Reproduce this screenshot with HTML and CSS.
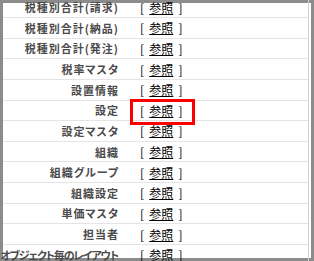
FILE: index.html
```html
<!DOCTYPE html>
<html lang="ja">
<head>
    <meta charset="UTF-8">
    <title>参照一覧</title>
    <link rel="stylesheet" href="styles.css">
</head>
<body>
    <div class="frame">
        <div class="list">
            <div class="row"><span class="label">税種別合計(請求)</span><span class="value">[ <a href="#">参照</a> ]</span></div>
            <div class="row"><span class="label">税種別合計(納品)</span><span class="value">[ <a href="#">参照</a> ]</span></div>
            <div class="row"><span class="label">税種別合計(発注)</span><span class="value">[ <a href="#">参照</a> ]</span></div>
            <div class="row"><span class="label">税率マスタ</span><span class="value">[ <a href="#">参照</a> ]</span></div>
            <div class="row"><span class="label">設置情報</span><span class="value">[ <a href="#">参照</a> ]</span></div>
            <div class="row"><span class="label">設定</span><span class="value">[ <a href="#">参照</a> ]</span></div>
            <div class="row"><span class="label">設定マスタ</span><span class="value">[ <a href="#">参照</a> ]</span></div>
            <div class="row"><span class="label">組織</span><span class="value">[ <a href="#">参照</a> ]</span></div>
            <div class="row"><span class="label">組織グループ</span><span class="value">[ <a href="#">参照</a> ]</span></div>
            <div class="row"><span class="label">組織設定</span><span class="value">[ <a href="#">参照</a> ]</span></div>
            <div class="row"><span class="label">単価マスタ</span><span class="value">[ <a href="#">参照</a> ]</span></div>
            <div class="row"><span class="label">担当者</span><span class="value">[ <a href="#">参照</a> ]</span></div>
            <div class="row"><span class="label label-long">オブジェクト毎のレイアウト</span><span class="value">[ <a href="#">参照</a> ]</span></div>
        </div>
        <div class="highlight"></div>
    </div>
</body>
</html>
```

FILE: styles.css
```css
html, body {
    margin: 0;
    padding: 0;
    background: #fff;
    overflow: hidden;
}

.frame {
    position: relative;
    width: 314px;
    height: 261px;
    box-sizing: border-box;
    border: 3px solid #8c8c8c;
    background: #fff;
}

.list {
    margin-top: -5.6px;
    margin-right: 2px;
    border-right: 1px solid #d4d4d4;
}

.row {
    display: grid;
    grid-template-columns: 123px 1fr;
    align-items: center;
    height: 20.64px;
    box-sizing: border-box;
    border-bottom: 1px solid #e4e4e4;
    font-family: "Noto Sans CJK JP", sans-serif;
}

.label {
    text-align: right;
    padding-right: 7px;
    font-size: 11px;
    font-weight: bold;
    letter-spacing: 1px;
    color: #4a4a4a;
    white-space: nowrap;
    font-feature-settings: "palt";
    direction: rtl;
}

.label-long {
    letter-spacing: -1.1px;
    padding-right: 8px;
}

.value {
    padding-left: 14px;
    font-size: 12px;
    word-spacing: 2.5px;
    color: #000;
    white-space: nowrap;
}

.value a {
    color: #000;
    text-decoration: underline;
}

.highlight {
    position: absolute;
    left: 127px;
    top: 96px;
    width: 65px;
    height: 26px;
    box-sizing: border-box;
    border: 3px solid #f00;
}
```
